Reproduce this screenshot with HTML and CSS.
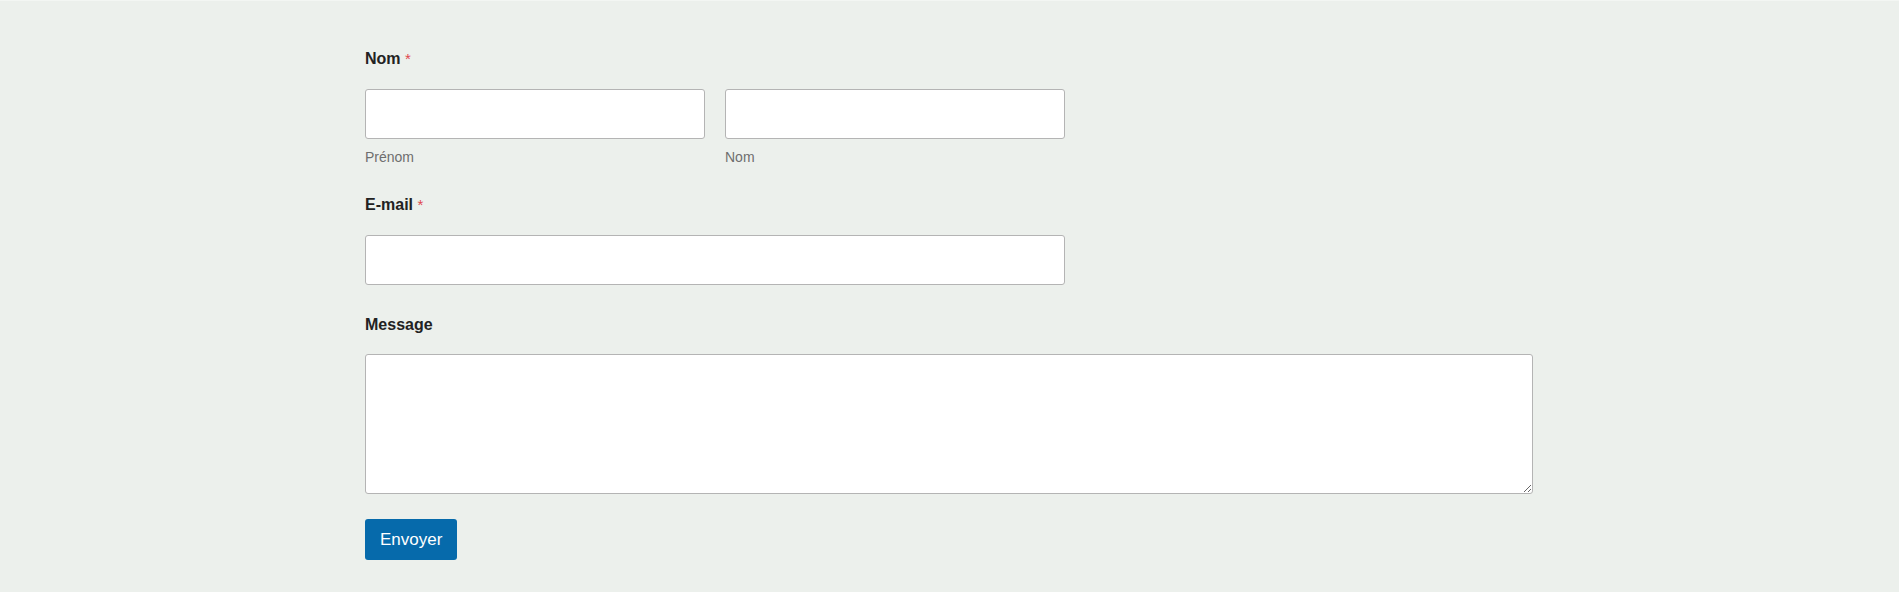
FILE: index.html
```html
<!DOCTYPE html>
<html lang="fr">
<head>
<meta charset="utf-8">
<title>Contact</title>
<link rel="stylesheet" href="styles.css">
</head>
<body>
<div class="page">
  <form class="form">
    <div class="field">
      <label class="label">Nom <span class="req">*</span></label>
      <div class="row medium">
        <div class="col">
          <input class="input" type="text">
          <span class="sublabel">Prénom</span>
        </div>
        <div class="col">
          <input class="input" type="text">
          <span class="sublabel">Nom</span>
        </div>
      </div>
    </div>
    <div class="field">
      <label class="label">E-mail <span class="req">*</span></label>
      <div class="medium">
        <input class="input" type="email">
      </div>
    </div>
    <div class="field field-message">
      <label class="label">Message</label>
      <textarea class="textarea"></textarea>
    </div>
    <div class="submit">
      <button class="btn" type="button">Envoyer</button>
    </div>
  </form>
</div>
</body>
</html>
```

FILE: styles.css
```css
html, body {
  margin: 0;
  padding: 0;
}
body {
  background: #ecf0ec;
  border-top: 1px solid #f3f6f3;
  font-family: "Liberation Sans", Arial, sans-serif;
  color: #262626;
  height: 591px;
  overflow: hidden;
}
.page {
  width: 1168px;
  margin-left: calc(50% - 584.5px);
  padding-top: 48px;
}
.form {
  display: flex;
  flex-direction: column;
}
.field {
  display: flex;
  flex-direction: column;
  margin-bottom: 30px;
}
.label {
  display: block;
  font-size: 16px;
  font-weight: 700;
  line-height: 20px;
  margin-bottom: 20px;
  color: #222;
}
.req {
  color: #e0474c;
  font-weight: 400;
  font-size: 15px;
}
.medium {
  width: 700px;
}
.row {
  display: flex;
  gap: 20px;
}
.col {
  flex: 1;
  display: flex;
  flex-direction: column;
}
.input {
  box-sizing: border-box;
  width: 100%;
  height: 50px;
  margin: 0;
  background: #fff;
  border: 1px solid #b4b4b4;
  border-radius: 3px;
  padding: 0 10px;
  font: 16px "Liberation Sans", Arial, sans-serif;
}
.sublabel {
  display: block;
  margin-top: 10px;
  font-size: 14px;
  line-height: 16px;
  color: #6e6e6e;
}
.textarea {
  box-sizing: border-box;
  width: 100%;
  height: 140px;
  margin: -1px 0 0 0;
  background: #fff;
  border: 1px solid #b4b4b4;
  border-radius: 3px;
  padding: 10px;
  font: 16px "Liberation Sans", Arial, sans-serif;
  resize: vertical;
  display: block;
}
.field-message {
  margin-bottom: 25px;
}
.submit {
  display: flex;
}
.btn {
  height: 41px;
  padding: 0 15px;
  background: #066aab;
  color: #fff;
  border: none;
  border-radius: 3px;
  font: 17px "Liberation Sans", Arial, sans-serif;
  cursor: pointer;
}
```
